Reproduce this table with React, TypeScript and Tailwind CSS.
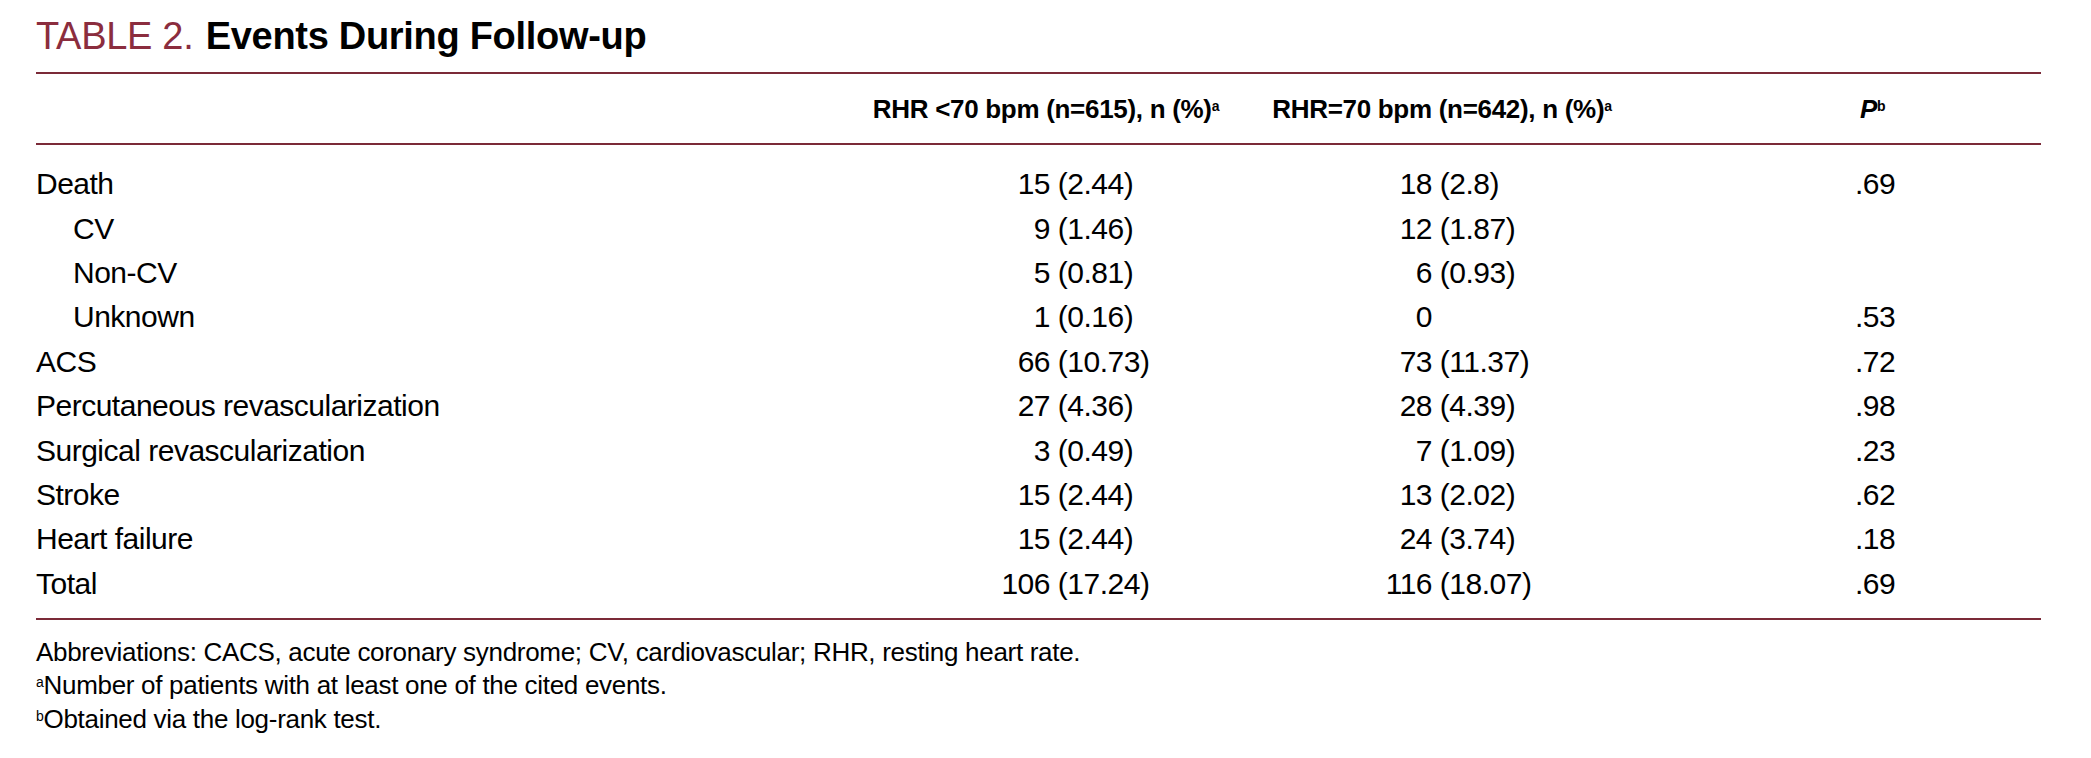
const rows: { label: string; indent?: boolean; a: [string, string]; b: [string, string | null]; p: string }[] = [
  { label: "Death", a: ["15", "2.44"], b: ["18", "2.8"], p: ".69" },
  { label: "CV", indent: true, a: ["9", "1.46"], b: ["12", "1.87"], p: "" },
  { label: "Non-CV", indent: true, a: ["5", "0.81"], b: ["6", "0.93"], p: "" },
  { label: "Unknown", indent: true, a: ["1", "0.16"], b: ["0", null], p: ".53" },
  { label: "ACS", a: ["66", "10.73"], b: ["73", "11.37"], p: ".72" },
  { label: "Percutaneous revascularization", a: ["27", "4.36"], b: ["28", "4.39"], p: ".98" },
  { label: "Surgical revascularization", a: ["3", "0.49"], b: ["7", "1.09"], p: ".23" },
  { label: "Stroke", a: ["15", "2.44"], b: ["13", "2.02"], p: ".62" },
  { label: "Heart failure", a: ["15", "2.44"], b: ["24", "3.74"], p: ".18" },
  { label: "Total", a: ["106", "17.24"], b: ["116", "18.07"], p: ".69" },
];

function Rule() {
  return <div className="h-[2px] w-[2005px] bg-[#7b2a38]" />;
}

export default function App() {
  return (
    <div className="h-[758px] w-[2091px] overflow-hidden bg-white pl-[36px] font-['Liberation_Sans_Narrow','Arial_Narrow','Liberation_Sans',sans-serif] text-black">
      <div className="flex h-[72px] items-center whitespace-pre text-[38px] leading-none tracking-[-0.3px]">
        <span className="text-[#8b2d3e]">TABLE 2.</span>
        <span className="ml-[2px] font-bold"> Events During Follow-up</span>
      </div>
      <Rule />
      <div className="flex h-[69px] items-center whitespace-nowrap text-[26px] font-bold leading-none tracking-[-0.3px]">
        <div className="w-[810px]" />
        <div className="w-[400px] text-center">
          RHR &lt;70 bpm (n=615), n (%)<sup className="text-[14px]">a</sup>
        </div>
        <div className="w-[392px] text-center">
          RHR=70 bpm (n=642), n (%)<sup className="text-[14px]">a</sup>
        </div>
        <div className="pl-[222px] italic">
          P<sup className="text-[14px] not-italic">b</sup>
        </div>
      </div>
      <Rule />
      <div className="pt-[17px] pb-[12px] text-[30px] tracking-[-0.5px]">
        {rows.map((r) => (
          <div key={r.label} className="grid h-[44.4px] grid-cols-[914px_100px_282px_100px_423px_1fr] items-center whitespace-pre leading-none">
            <span className={r.indent ? "pl-[37px]" : ""}>{r.label}</span>
            <span className="text-right">{r.a[0]}</span>
            <span>{" (" + r.a[1] + ")"}</span>
            <span className="text-right">{r.b[0]}</span>
            <span>{r.b[1] ? " (" + r.b[1] + ")" : ""}</span>
            <span>{r.p}</span>
          </div>
        ))}
      </div>
      <Rule />
      <div className="pt-[16px] text-[26px] leading-[33.4px] tracking-[-0.3px]">
        <div>Abbreviations: CACS, acute coronary syndrome; CV, cardiovascular; RHR, resting heart rate.</div>
        <div>
          <sup className="text-[14px]">a</sup>Number of patients with at least one of the cited events.
        </div>
        <div>
          <sup className="text-[14px]">b</sup>Obtained via the log-rank test.
        </div>
      </div>
    </div>
  );
}
